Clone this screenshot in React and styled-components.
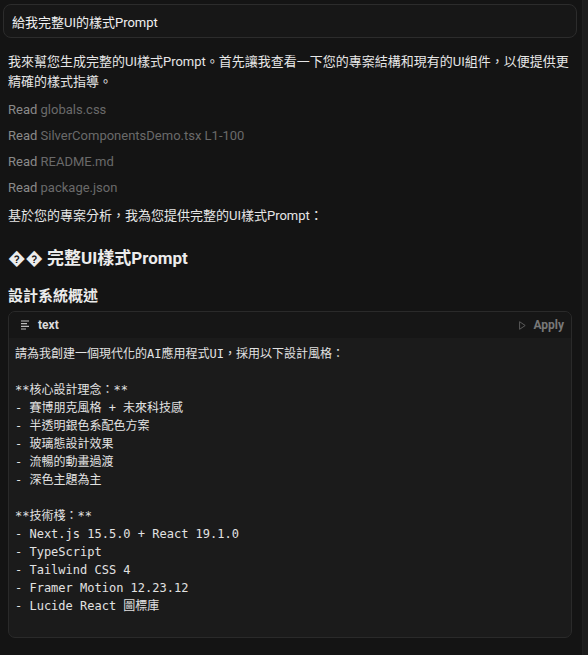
import React from "react";
import styled, { createGlobalStyle } from "styled-components";

const SANS = `Roboto, "Helvetica Neue", Arial, "Noto Sans CJK TC", sans-serif`;
const MONO = `"DejaVu Sans Mono", "Liberation Mono", "Noto Sans CJK TC", monospace`;

const Global = createGlobalStyle`
  html, body { margin: 0; padding: 0; background: #141414; }
  body { font-family: ${SANS}; color: #e4e4e4; }
`;

const Shell = styled.div`
  display: flex;
  width: 588px;
  height: 655px;
  overflow: hidden;
  background: #141414;
`;

const Main = styled.div`
  flex: 1;
  padding: 4px 8px 0 8px;
  display: flex;
  flex-direction: column;
`;

const Track = styled.div`
  width: 5px;
  background: #1c1c1c;
  border-left: 1px solid #202020;
`;

const UserBubble = styled.div`
  margin: 0 -3px 0 -5px;
  height: 34px;
  box-sizing: border-box;
  border: 1px solid #2c2c2c;
  border-radius: 8px;
  background: #171717;
  padding: 0 8px;
  display: flex;
  align-items: center;
  font-size: 13px;
  color: #f0f0f0;
`;

const Para = styled.p`
  margin: ${(p) => p.$mt || 0}px 0 0;
  font-size: 13px;
  line-height: 20px;
  color: #e6e6e6;
`;

const ReadList = styled.div`
  margin-top: 8px;
  display: flex;
  flex-direction: column;
  gap: 6px;
`;

const ReadRow = styled.div`
  font-size: 13px;
  line-height: 20px;
  color: #8a8a8a;
  span { color: #6a6a6a; }
`;

const H2 = styled.h2`
  margin: 20px 0 0;
  font-size: 17px;
  line-height: 24px;
  font-weight: 700;
  color: #ececec;
`;

const H3 = styled.h3`
  margin: 15px 0 0;
  font-size: 15px;
  line-height: 22px;
  font-weight: 700;
  color: #ececec;
`;

const CodeBlock = styled.div`
  margin: 4px 2px 0 0;
  border: 1px solid #2a2a2a;
  border-radius: 7px;
  overflow: hidden;
  background: #1b1b1b;
`;

const CodeHeader = styled.div`
  height: 26px;
  display: flex;
  align-items: center;
  padding: 0 7px 0 12px;
  background: #161616;
`;

const Lang = styled.div`
  display: flex;
  align-items: center;
  gap: 8px;
  font-size: 12px;
  font-weight: 700;
  color: #dcdcdc;
`;

const ApplyBtn = styled.div`
  margin-left: auto;
  display: flex;
  align-items: center;
  gap: 7px;
  font-size: 12px;
  font-weight: 700;
  color: #787878;
`;

const Pre = styled.pre`
  margin: 0;
  padding: 7px 6px 22px;
  font-family: ${MONO};
  font-size: 12px;
  line-height: 18px;
  color: #e2e2e2;
  white-space: pre-wrap;
`;

const code = `請為我創建一個現代化的AI應用程式UI，採用以下設計風格：

**核心設計理念：**
- 賽博朋克風格 + 未來科技感
- 半透明銀色系配色方案
- 玻璃態設計效果
- 流暢的動畫過渡
- 深色主題為主

**技術棧：**
- Next.js 15.5.0 + React 19.1.0
- TypeScript
- Tailwind CSS 4
- Framer Motion 12.23.12
- Lucide React 圖標庫
`;

const reads = [
  "globals.css",
  "SilverComponentsDemo.tsx L1-100",
  "README.md",
  "package.json",
];

export default function App() {
  return (
    <Shell>
      <Global />
      <Main>
        <UserBubble>給我完整UI的樣式Prompt</UserBubble>

        <Para $mt={14}>
          我來幫您生成完整的UI樣式Prompt。首先讓我查看一下您的專案結構和現有的UI組件，以便提供更精確的樣式指導。
        </Para>

        <ReadList>
          {reads.map((r) => (
            <ReadRow key={r}>
              Read <span>{r}</span>
            </ReadRow>
          ))}
        </ReadList>

        <Para $mt={8}>基於您的專案分析，我為您提供完整的UI樣式Prompt：</Para>

        <H2>{"\uFFFD\uFFFD"} 完整UI樣式Prompt</H2>
        <H3>設計系統概述</H3>

        <CodeBlock>
          <CodeHeader>
            <Lang>
              <svg width="9" height="10" viewBox="0 0 9 10">
                <g stroke="#bdbdbd" strokeWidth="1.2">
                  <line x1="0" y1="1" x2="8" y2="1" />
                  <line x1="0" y1="3.7" x2="6" y2="3.7" />
                  <line x1="0" y1="6.4" x2="8" y2="6.4" />
                  <line x1="0" y1="9" x2="5" y2="9" />
                </g>
              </svg>
              text
            </Lang>
            <ApplyBtn>
              <svg width="7" height="9" viewBox="0 0 7 9">
                <path d="M0.6 0.7 L6.2 4.5 L0.6 8.3 Z" fill="none" stroke="#5a5a5a" strokeWidth="1" />
              </svg>
              Apply
            </ApplyBtn>
          </CodeHeader>
          <Pre>{code}</Pre>
        </CodeBlock>
      </Main>
      <Track />
    </Shell>
  );
}
